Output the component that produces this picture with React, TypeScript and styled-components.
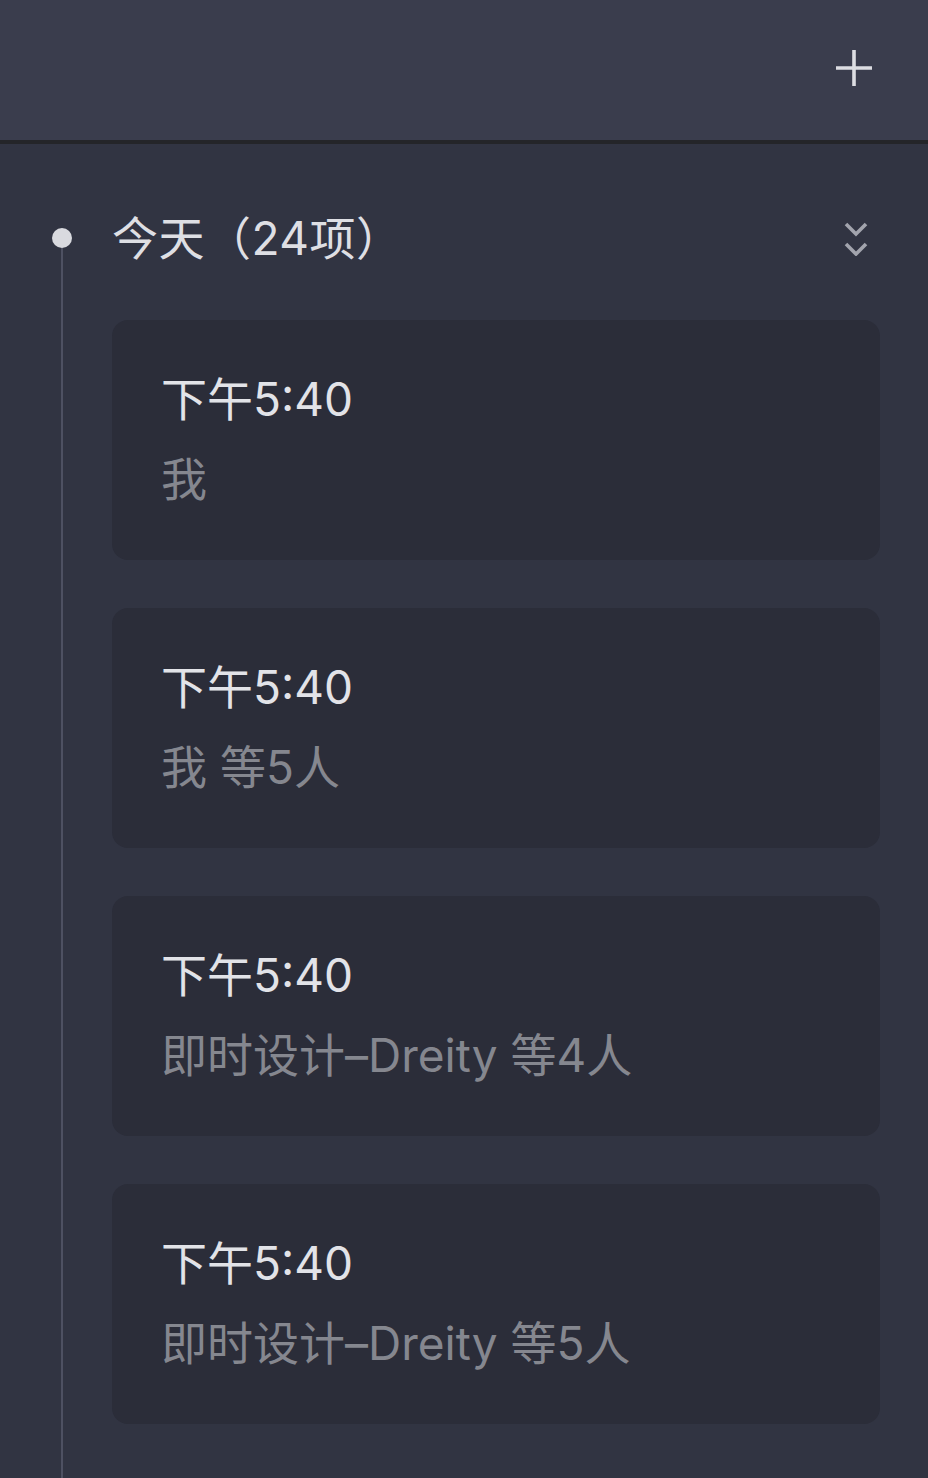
import React from "react";
import styled, { createGlobalStyle } from "styled-components";

const Global = createGlobalStyle`
  html, body { margin: 0; padding: 0; background: #313442; }
  body { font-family: Inter, "Noto Sans CJK SC", "Noto Sans", sans-serif; }
  * { box-sizing: border-box; }
`;

const Page = styled.div`
  min-height: 1478px;
  display: flex;
  flex-direction: column;
  background: #313442;
`;

const Header = styled.header`
  height: 144px;
  background: #3a3d4d;
  border-bottom: 4px solid #242529;
  display: flex;
  align-items: center;
  justify-content: flex-end;
  padding: 0 56px 4px 0;
`;

const IconButton = styled.button`
  width: 36px;
  height: 36px;
  padding: 0;
  border: 0;
  background: transparent;
  color: #dcdde2;
  display: flex;
  cursor: pointer;
`;

const Section = styled.section`
  flex: 1;
  display: flex;
  padding: 64px 48px 0 52px;
`;

const Rail = styled.div`
  width: 20px;
  margin-right: 40px;
  padding-top: 20px;
  display: flex;
  flex-direction: column;
  align-items: center;
`;

const Dot = styled.span`
  width: 20px;
  height: 20px;
  border-radius: 50%;
  background: #d9dadf;
  flex: none;
`;

const Line = styled.span`
  flex: 1;
  width: 2px;
  background: #4e5162;
`;

const Content = styled.div`
  flex: 1;
  display: flex;
  flex-direction: column;
`;

const TitleRow = styled.div`
  height: 60px;
  display: flex;
  align-items: center;
  justify-content: space-between;
  padding-right: 12px;
  margin-bottom: 52px;
`;

const Title = styled.h2`
  margin: 0;
  font-size: 46px;
  font-weight: 400;
  line-height: 60px;
  letter-spacing: 0.5px;
  color: #dedfe4;
`;

const Toggle = styled.button`
  width: 24px;
  height: 36px;
  padding: 0;
  border: 0;
  background: transparent;
  color: #a2a4ad;
  display: flex;
  cursor: pointer;
`;

const List = styled.div`
  display: flex;
  flex-direction: column;
  gap: 48px;
`;

const Card = styled.div`
  height: 240px;
  border-radius: 16px;
  background: #2b2d39;
  padding: 49px 50px 0 49px;
  display: flex;
  flex-direction: column;
`;

const Time = styled.div`
  font-size: 46px;
  line-height: 60px;
  color: #e2e3e8;
`;

const Members = styled.div`
  margin-top: 20px;
  font-size: 46px;
  line-height: 60px;
  color: #85878f;
`;

const items = [
  { time: "下午5:40", members: "我" },
  { time: "下午5:40", members: "我 等5人" },
  { time: "下午5:40", members: "即时设计–Dreity 等4人" },
  { time: "下午5:40", members: "即时设计–Dreity 等5人" },
];

export default function App() {
  return (
    <Page>
      <Global />
      <Header>
        <IconButton aria-label="新建">
          <svg width="36" height="36" viewBox="0 0 36 36">
            <path d="M18 0v36M0 18h36" stroke="currentColor" strokeWidth="3.6" fill="none" />
          </svg>
        </IconButton>
      </Header>
      <Section>
        <Rail>
          <Dot />
          <Line />
        </Rail>
        <Content>
          <TitleRow>
            <Title>今天（24项）</Title>
            <Toggle aria-label="展开">
              <svg width="24" height="36" viewBox="0 0 24 36">
                <path
                  d="M2 4l10 10 10-10M2 24l10 10 10-10"
                  stroke="currentColor"
                  strokeWidth="3.6"
                  fill="none"
                />
              </svg>
            </Toggle>
          </TitleRow>
          <List>
            {items.map((it, i) => (
              <Card key={i}>
                <Time>{it.time}</Time>
                <Members>{it.members}</Members>
              </Card>
            ))}
          </List>
        </Content>
      </Section>
    </Page>
  );
}
